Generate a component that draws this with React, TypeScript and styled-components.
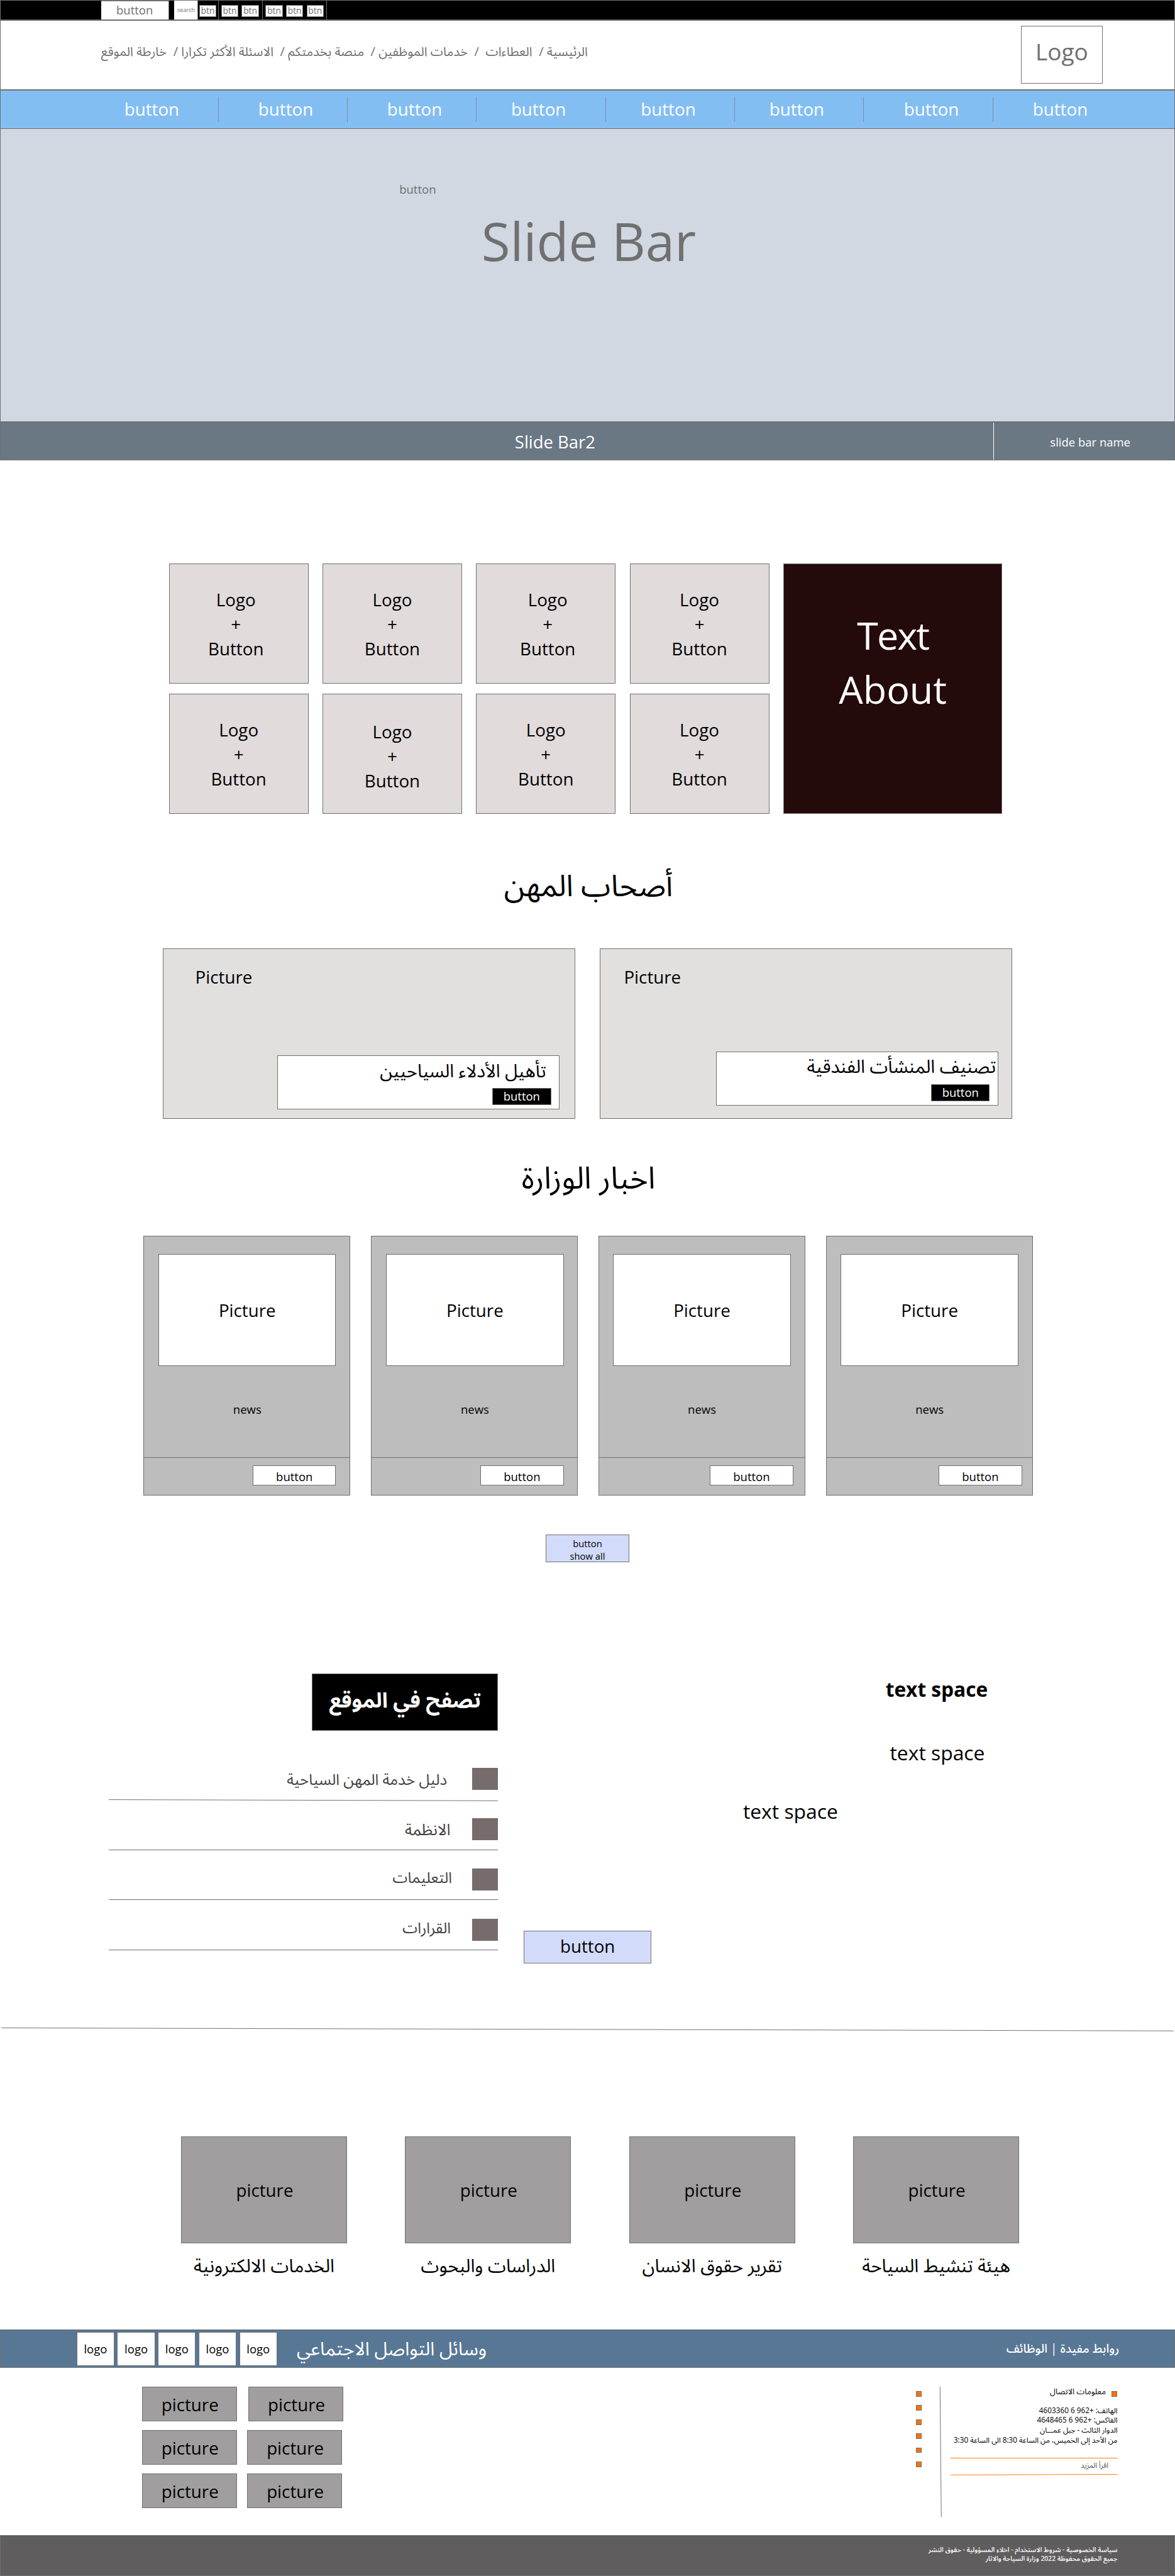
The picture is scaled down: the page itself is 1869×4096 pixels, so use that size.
import React from 'react';
import styled, { createGlobalStyle } from 'styled-components';

const LINE = '#707070';

const GlobalStyle = createGlobalStyle`
  *, *::before, *::after { box-sizing: border-box; }
  html, body { margin: 0; padding: 0; background: #fff; }
`;

/* Designed on a 1920px wide artboard and zoomed down to the 1869px window. */
const Page = styled.div`
  zoom: 0.9734375;
  width: 1920px;
  height: 4207.8px;
  overflow: hidden;
  display: flex;
  flex-direction: column;
  background: #fff;
  color: #000;
  font-family: 'Open Sans', 'Noto Sans Arabic', 'DejaVu Sans', sans-serif;
  line-height: 1.362;
`;

const Text = styled.span<{ $size: number; $weight?: number; $color?: string; $tracking?: number }>`
  display: block;
  flex: none;
  white-space: pre;
  font-size: ${p => p.$size}px;
  font-weight: ${p => p.$weight ?? 400};
  color: ${p => p.$color ?? 'inherit'};
  letter-spacing: ${p => (p.$tracking ? `${p.$tracking}px` : 'normal')};
`;

const Arabic = styled(Text).attrs({ dir: 'rtl', lang: 'ar' })``;

/* ---------- top bar ---------- */

const TopBar = styled.div`
  display: flex;
  flex: none;
  height: 33px;
  padding-left: 164px;
  background: #000;
  border: 1px solid ${LINE};
  color: ${LINE};
`;

const TopButton = styled.div`
  display: flex;
  align-items: center;
  justify-content: center;
  width: 111px;
  padding-bottom: 2px;
  background: #fff;
  border-top: 1px solid ${LINE};
  border-right: 1px solid ${LINE};
`;

const SearchBox = styled.div`
  display: flex;
  align-items: center;
  justify-content: center;
  width: 39px;
  margin-left: 9px;
  background: #fff;
  border-right: 1px solid ${LINE};
`;

const ToolGroup = styled.div<{ $width: number; $start: number }>`
  display: flex;
  gap: 5.5px;
  width: ${p => p.$width}px;
  padding: 7px 0 0 ${p => p.$start}px;
  border-right: 1px solid ${LINE};
`;

const ToolButton = styled.div`
  display: flex;
  flex: none;
  align-items: center;
  justify-content: center;
  width: 28px;
  height: 20px;
  background: #fff;
  border: 1px solid ${LINE};
`;

/* ---------- header ---------- */

const Header = styled.header`
  display: flex;
  flex: none;
  justify-content: space-between;
  align-items: flex-start;
  height: 114px;
  padding: 0 117px 0 164px;
  border: 1px solid ${LINE};
  color: ${LINE};
`;

const Breadcrumbs = styled.nav`
  padding-top: 35.5px;
`;

const LogoBox = styled.div`
  display: flex;
  align-items: center;
  justify-content: center;
  width: 134px;
  height: 95px;
  margin-top: 8px;
  padding-bottom: 10px;
  border: 1px solid ${LINE};
`;

/* ---------- main navigation ---------- */

const MainNav = styled.nav`
  display: grid;
  flex: none;
  grid-template-columns: repeat(8, 211px);
  height: 64px;
  padding: 10px 0 0 145px;
  background: #83bef3;
  border: 1px solid ${LINE};
  color: #fff;
`;

const NavItem = styled.div<{ $shift: number }>`
  display: flex;
  align-items: center;
  justify-content: center;
  height: 41px;
  padding-left: ${p => Math.max(0, p.$shift * 2)}px;
  padding-right: ${p => Math.max(0, -p.$shift * 2)}px;
  border-right: 1px solid rgba(112, 112, 112, 0.6);
  &:last-child { border-right-color: transparent; }
`;

/* ---------- hero ---------- */

const Hero = styled.section`
  display: flex;
  flex: none;
  flex-direction: column;
  align-items: center;
  height: 478px;
  padding-top: 84.7px;
  background: #d1d8e2;
  border: 1px solid ${LINE};
  border-top: none;
  color: ${LINE};
`;

const HeroButton = styled.div`
  align-self: flex-start;
  margin: 0 0 12.8px 651.5px;
`;

const HeroTitle = styled.div`
  padding: 1px 0 0 4px;
`;

const SlideStrip = styled.section`
  display: flex;
  flex: none;
  height: 63px;
  background: #6a7884;
  border: 1px solid ${LINE};
  color: #fff;
`;

const StripMain = styled.div`
  display: flex;
  align-items: center;
  justify-content: center;
  width: 1623px;
  padding: 2px 0 0 190px;
  border-right: 1px solid #fff;
`;

const StripSide = styled.div`
  display: flex;
  flex: 1;
  align-items: center;
  justify-content: center;
  padding: 2px 0 0 20px;
`;

/* ---------- services ---------- */

const Services = styled.section`
  display: grid;
  flex: none;
  grid-template-columns: repeat(4, 228px) 358px;
  grid-template-rows: 196px 196px;
  gap: 16px 23px;
  margin: 169px 0 0 276px;
`;

const ServiceCard = styled.div<{ $shift?: number; $drop?: number }>`
  padding-top: ${p => 38 + (p.$drop ?? 0)}px;
  padding-left: ${p => Math.max(0, (p.$shift ?? 0) * 2)}px;
  padding-right: ${p => Math.max(0, -(p.$shift ?? 0) * 2)}px;
  background: #e1dbdb;
  border: 1px solid ${LINE};
  text-align: center;
  line-height: 40px;
`;

const AboutCard = styled.div`
  grid-column: 5;
  grid-row: 1 / 3;
  padding-top: 71.7px;
  background: #250a0b;
  border: 1px solid ${LINE};
  color: #fff;
  text-align: center;
  line-height: 88px;
`;

const SectionTitle = styled.h2<{ $height: number; $top: number }>`
  display: flex;
  flex: none;
  justify-content: center;
  height: ${p => p.$height}px;
  margin: 0;
  padding-top: ${p => p.$top}px;
  padding-left: 3px;
`;

/* ---------- professions ---------- */

const Professions = styled.section`
  display: flex;
  flex: none;
  gap: 40px;
  padding-left: 266px;
`;

const PromoCard = styled.article<{ $start: number }>`
  display: flex;
  flex-direction: column;
  width: 674px;
  height: 279px;
  padding: 26.5px 0 0 ${p => p.$start}px;
  background: #e2e0df;
  border: 1px solid ${LINE};
`;

const PromoPanel = styled.div<{ $right: number; $bottom: number }>`
  display: flex;
  flex-direction: column;
  align-items: flex-end;
  align-self: flex-end;
  width: 461px;
  height: 88px;
  margin: auto ${p => p.$right}px ${p => p.$bottom}px 0;
  padding: 3px 0 0;
  background: #fff;
  border: 1px solid ${LINE};
`;

const PromoTitle = styled.div<{ $inset: number }>`
  margin-right: ${p => p.$inset}px;
`;

const PromoButton = styled.div`
  display: flex;
  align-items: center;
  justify-content: center;
  width: 96px;
  height: 28px;
  margin: 8.5px 12.5px 0 0;
  padding-bottom: 2px;
  background: #000;
  border: 1px solid ${LINE};
  color: #fff;
`;

/* ---------- news ---------- */

const NewsList = styled.section`
  display: flex;
  flex: none;
  gap: 34px;
  padding-left: 234px;
`;

const NewsCard = styled.article`
  display: flex;
  flex-direction: column;
  width: 338px;
  height: 424px;
  background: #bdbdbd;
  border: 1px solid ${LINE};
`;

const NewsPicture = styled.div<{ $start: number }>`
  display: flex;
  flex: none;
  align-items: center;
  justify-content: center;
  width: 290px;
  height: 183px;
  margin: 28px 0 0 ${p => p.$start}px;
  padding-top: 3px;
  background: #fff;
  border: 1px solid ${LINE};
`;

const NewsBody = styled.div<{ $start: number }>`
  display: flex;
  flex: none;
  justify-content: center;
  width: 290px;
  height: 149px;
  margin-left: ${p => p.$start}px;
  padding-top: 57.7px;
`;

const NewsFooter = styled.div<{ $start: number }>`
  flex: 1;
  padding: 13px 0 0 ${p => p.$start}px;
  border-top: 1px solid ${LINE};
`;

const NewsButton = styled.div`
  display: flex;
  align-items: center;
  justify-content: center;
  width: 136px;
  height: 33px;
  padding-top: 2px;
  background: #fff;
  border: 1px solid ${LINE};
`;

const ShowAll = styled.div`
  flex: none;
  width: 136px;
  height: 45px;
  margin: 64px 0 0 892px;
  padding-top: 2.6px;
  background: #d2dbf9;
  border: 1px solid ${LINE};
  text-align: center;
  line-height: 21px;
`;

/* ---------- browse ---------- */

const Browse = styled.section`
  display: flex;
  flex: none;
  align-items: flex-start;
  height: 760px;
  padding-left: 177.5px;
`;

const BrowseMenu = styled.div`
  display: flex;
  flex-direction: column;
  width: 636.5px;
  padding-top: 182px;
`;

const BrowseTitle = styled.div`
  display: flex;
  align-items: center;
  justify-content: center;
  align-self: flex-end;
  width: 304px;
  height: 93px;
  margin-bottom: 61px;
  padding-bottom: 8px;
  background: #000;
  border: 1px solid ${LINE};
  color: #fff;
`;

const MenuRow = styled.div<{ $gap: number; $slanted?: boolean }>`
  display: flex;
  justify-content: flex-end;
  align-items: flex-start;
  gap: ${p => p.$gap}px;
  height: ${p => (p.$slanted ? 50 : 52)}px;
  margin-bottom: ${p => (p.$slanted ? 0 : 30)}px;
  border-bottom: ${p => (p.$slanted ? 'none' : `1px solid ${LINE}`)};
  color: #463f3f;
`;

const MenuLabel = styled.div<{ $top: number }>`
  margin-top: ${p => p.$top}px;
`;

const MenuIcon = styled.div`
  width: 43px;
  height: 36px;
  background: #766c6c;
`;

const Rule = styled.svg<{ $after?: number }>`
  display: block;
  flex: none;
  margin-bottom: ${p => p.$after ?? 0}px;
`;

const BrowseButton = styled.div`
  display: flex;
  align-items: center;
  justify-content: center;
  width: 209px;
  height: 53px;
  margin: 602px 0 0 41.7px;
  padding-bottom: 3px;
  background: #d2dbf9;
  border: 1px solid ${LINE};
`;

const TextColumn = styled.div`
  display: flex;
  flex-direction: column;
  padding-top: 185px;
`;

const Paragraph = styled.div<{ $start: number; $after: number }>`
  margin: 0 0 ${p => p.$after}px ${p => p.$start}px;
`;

/* ---------- related ---------- */

const Related = styled.section`
  display: flex;
  flex: none;
  gap: 95.1px;
  height: 487px;
  padding: 172px 0 0 296px;
`;

const RelatedItem = styled.div`
  display: flex;
  flex-direction: column;
  align-items: center;
  gap: 17px;
  width: 271px;
`;

const GreyPicture = styled.div<{ $width: number; $height: number }>`
  display: flex;
  flex: none;
  align-items: center;
  justify-content: center;
  width: ${p => p.$width}px;
  height: ${p => p.$height}px;
  padding: 2px 0 0 2px;
  background: #a09e9e;
  border: 1px solid ${LINE};
`;

/* ---------- footer ---------- */

const SocialBar = styled.section`
  display: flex;
  flex: none;
  align-items: center;
  height: 63px;
  padding: 0 90px 0 124px;
  background: #577795;
  border: 1px solid ${LINE};
  color: #fff;
`;

const SocialLogos = styled.div`
  display: flex;
  gap: 4.5px;
  margin: 1px 32px 0 0;
`;

const SocialLogo = styled.div`
  display: flex;
  align-items: center;
  justify-content: center;
  width: 62px;
  height: 55px;
  background: #fff;
  border: 1px solid ${LINE};
  color: #000;
`;

const UsefulLinks = styled.div`
  margin-left: auto;
`;

const FooterBody = styled.section`
  display: flex;
  flex: none;
  align-items: flex-start;
  height: 273px;
  padding: 31px 94px 0 232px;
`;

const PictureRows = styled.div`
  display: flex;
  flex-direction: column;
  gap: 15px;
  margin-right: auto;
`;

const PictureRow = styled.div<{ $gap: number }>`
  display: flex;
  gap: ${p => p.$gap}px;
`;

const Markers = styled.div`
  display: flex;
  flex-direction: column;
  gap: 14px;
  padding-top: 7px;
  margin-right: 29px;
`;

const Marker = styled.div`
  flex: none;
  width: 9px;
  height: 9px;
  background: #ff7200;
  border: 1px solid ${LINE};
`;

const Contact = styled.div`
  width: 273px;
  margin-left: 14px;
`;

const ContactHead = styled.div`
  display: flex;
  justify-content: flex-end;
  align-items: flex-start;
  gap: 9px;
  height: 30.3px;
  padding-right: 1px;
  ${Marker} { margin-top: 7px; }
`;

const ContactTitle = styled.div`
  margin-top: -1.1px;
`;

const ContactLines = styled.div`
  line-height: 16px;
`;

const ReadMore = styled.div`
  height: 25px;
  margin-top: 22px;
  padding: 3px 15px 0 0;
  border-top: 1px solid #ff7b0f;
`;

const LegalBar = styled.footer`
  flex: none;
  height: 66.8px;
  padding: 15.3px 93px 0 0;
  background: #5f5d5e;
  border: 1px solid ${LINE};
  color: #f4f4f4;
  line-height: 15px;
`;

const navShifts = [-3, 5, 4.5, -4, -3, -4, 5, 4.5];

const services = [
  { shift: -4.5, drop: 0 }, { shift: 0, drop: 0 }, { shift: 3, drop: 0 }, { shift: 0, drop: 0 },
  { shift: 0, drop: 0 }, { shift: 0, drop: 3 }, { shift: 0, drop: 0 }, { shift: 0, drop: 0 },
];

const promos = [
  { title: 'تأهيل الأدلاء السياحيين', size: 29.7, start: 52, right: 25, bottom: 15, inset: 20.5 },
  { title: 'تصنيف المنشأت الفندقية', size: 30, start: 38.5, right: 22, bottom: 21, inset: 2.5 },
];

const news = [
  { start: 24, button: 178 }, { start: 24, button: 178 },
  { start: 23, button: 181 }, { start: 23, button: 183 },
];

const menu = [
  { label: 'دليل خدمة المهن السياحية', size: 24.9, top: 0.8, gap: 40.5, slanted: true },
  { label: 'الانظمة', size: 26, top: 0, gap: 35 },
  { label: 'التعليمات', size: 24.7, top: -1.7, gap: 32.5 },
  { label: 'القرارات', size: 24.8, top: -1.9, gap: 34.5 },
];

const related = ['الخدمات الالكترونية', 'الدراسات والبحوث', 'تقرير حقوق الانسان', 'هيئة تنشيط السياحة'];

const contactLines = [
  'الهاتف: +962 6 4603360',
  'الفاكس: +962 6 4648465',
  'الدوار الثالث - جبل عمـــان',
  'من الأحد إلى الخميس، من الساعة 8:30 الى الساعة 3:30',
];

function Tools({ count, width, start }: { count: number; width: number; start: number }) {
  return (
    <ToolGroup $width={width} $start={start}>
      {Array.from({ length: count }, (_, i) => (
        <ToolButton key={i}><Text $size={14.2}>btn</Text></ToolButton>
      ))}
    </ToolGroup>
  );
}

export default function App() {
  return (
    <>
      <GlobalStyle />
      <Page>
        <TopBar>
          <TopButton><Text $size={19}>button</Text></TopButton>
          <SearchBox><Text $size={9.5}>search</Text></SearchBox>
          <Tools count={1} width={33} start={1.5} />
          <Tools count={2} width={72} start={4.5} />
          <Tools count={3} width={105} start={5} />
        </TopBar>

        <Header>
          <Breadcrumbs>
            <Arabic $size={20.8}>
              {'الرئيسية /  العطاءات  /  خدمات الموظفين /  منصة بخدمتكم /  الاسئلة الأكثر تكرارا /  خارطة الموقع'}
            </Arabic>
          </Breadcrumbs>
          <LogoBox><Text $size={38}>Logo</Text></LogoBox>
        </Header>

        <MainNav>
          {navShifts.map((shift, i) => (
            <NavItem key={i} $shift={shift}><Text $size={28.5}>button</Text></NavItem>
          ))}
        </MainNav>

        <Hero>
          <HeroButton><Text $size={19}>button</Text></HeroButton>
          <HeroTitle><Text $size={85.6}>Slide Bar</Text></HeroTitle>
        </Hero>
        <SlideStrip>
          <StripMain><Text $size={28.2}>Slide Bar2</Text></StripMain>
          <StripSide><Text $size={19}>slide bar name</Text></StripSide>
        </SlideStrip>

        <Services>
          {services.map((s, i) => (
            <ServiceCard key={i} $shift={s.shift} $drop={s.drop}>
              <Text $size={28.5}>Logo</Text>
              <Text $size={28.5}>+</Text>
              <Text $size={28.5}>Button</Text>
            </ServiceCard>
          ))}
          <AboutCard>
            <Text $size={62.7} $tracking={-2}>Text</Text>
            <Text $size={62.7}>About</Text>
          </AboutCard>
        </Services>

        <SectionTitle $height={220} $top={83.6}><Arabic $size={49}>أصحاب المهن</Arabic></SectionTitle>
        <Professions>
          {promos.map(p => (
            <PromoCard key={p.title} $start={p.start}>
              <Text $size={28.5}>Picture</Text>
              <PromoPanel $right={p.right} $bottom={p.bottom}>
                <PromoTitle $inset={p.inset}><Arabic $size={p.size}>{p.title}</Arabic></PromoTitle>
                <PromoButton><Text $size={19}>button</Text></PromoButton>
              </PromoPanel>
            </PromoCard>
          ))}
        </Professions>

        <SectionTitle $height={191} $top={60.5}><Arabic $size={50}>اخبار الوزارة</Arabic></SectionTitle>
        <NewsList>
          {news.map((n, i) => (
            <NewsCard key={i}>
              <NewsPicture $start={n.start}><Text $size={28.5}>Picture</Text></NewsPicture>
              <NewsBody $start={n.start}><Text $size={19}>news</Text></NewsBody>
              <NewsFooter $start={n.button}>
                <NewsButton><Text $size={19}>button</Text></NewsButton>
              </NewsFooter>
            </NewsCard>
          ))}
        </NewsList>
        <ShowAll>
          <Text $size={15.2}>button</Text>
          <Text $size={15.2}>show all</Text>
        </ShowAll>

        <Browse>
          <BrowseMenu>
            <BrowseTitle><Arabic $size={34.2} $weight={700}>تصفح في الموقع</Arabic></BrowseTitle>
            {menu.map(m => (
              <React.Fragment key={m.label}>
                <MenuRow $gap={m.gap} $slanted={m.slanted}>
                  <MenuLabel $top={m.top}><Arabic $size={m.size}>{m.label}</Arabic></MenuLabel>
                  <MenuIcon />
                </MenuRow>
                {m.slanted && (
                  <Rule $after={28} width="636.5" height="4" viewBox="0 0 636.5 4">
                    <line x1="0" y1="1.6" x2="636.5" y2="3.4" stroke={LINE} />
                  </Rule>
                )}
              </React.Fragment>
            ))}
          </BrowseMenu>
          <BrowseButton><Text $size={28.5}>button</Text></BrowseButton>
          <TextColumn>
            <Paragraph $start={382.5} $after={59.8}><Text $size={32.5} $weight={700}>text space</Text></Paragraph>
            <Paragraph $start={389.5} $after={50.8}><Text $size={32.7}>text space</Text></Paragraph>
            <Paragraph $start={149.5} $after={0}><Text $size={32.7}>text space</Text></Paragraph>
          </TextColumn>
        </Browse>

        <Rule width="1920" height="6" viewBox="0 0 1920 6">
          <line x1="0" y1="0.5" x2="1920" y2="5.4" stroke={LINE} />
        </Rule>

        <Related>
          {related.map(title => (
            <RelatedItem key={title}>
              <GreyPicture $width={271} $height={174}><Text $size={28.5}>picture</Text></GreyPicture>
              <Arabic $size={30}>{title}</Arabic>
            </RelatedItem>
          ))}
        </Related>

        <SocialBar>
          <SocialLogos>
            {[0, 1, 2, 3, 4].map(i => (
              <SocialLogo key={i}><Text $size={19}>logo</Text></SocialLogo>
            ))}
          </SocialLogos>
          <Arabic $size={30.6}>وسائل التواصل الاجتماعي</Arabic>
          <UsefulLinks><Arabic $size={19.8} $weight={500}>روابط مفيدة | الوظائف</Arabic></UsefulLinks>
        </SocialBar>

        <FooterBody>
          <PictureRows>
            {[19, 17, 17].map((gap, i) => (
              <PictureRow key={i} $gap={gap}>
                <GreyPicture $width={155} $height={56}><Text $size={28.5}>picture</Text></GreyPicture>
                <GreyPicture $width={155} $height={56}><Text $size={28.5}>picture</Text></GreyPicture>
              </PictureRow>
            ))}
          </PictureRows>
          <Markers>
            {[0, 1, 2, 3, 4, 5].map(i => <Marker key={i} />)}
          </Markers>
          <Rule width="4" height="213" viewBox="0 0 4 213">
            <line x1="1.3" y1="0" x2="3.3" y2="213" stroke={LINE} />
          </Rule>
          <Contact>
            <ContactHead>
              <ContactTitle><Arabic $size={13.2}>معلومات الاتصال</Arabic></ContactTitle>
              <Marker />
            </ContactHead>
            <ContactLines>
              {contactLines.map(line => <Arabic key={line} $size={12.1}>{line}</Arabic>)}
            </ContactLines>
            <ReadMore><Arabic $size={11.8} $color="#555">اقرأ المزيد</Arabic></ReadMore>
            <Rule width="273" height="4" viewBox="0 0 273 4">
              <line x1="0" y1="2.4" x2="273" y2="1.5" stroke="#ff7b0f" />
            </Rule>
          </Contact>
        </FooterBody>

        <LegalBar>
          <Arabic $size={10.7} $weight={600}>سياسة الخصوصية - شروط الاستخدام - اخلاء المسؤولية - حقوق النشر</Arabic>
          <Arabic $size={10.7} $weight={600}>جميع الحقوق محفوظة 2022 وزارة السياحة والاثار</Arabic>
        </LegalBar>
      </Page>
    </>
  );
}
